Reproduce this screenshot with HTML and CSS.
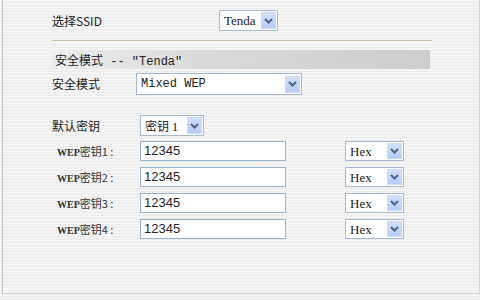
FILE: index.html
```html
<!DOCTYPE html>
<html lang="zh-CN">
<head>
    <meta charset="UTF-8">
    <title>无线安全设置</title>
    <link rel="stylesheet" href="styles.css">
</head>
<body>
    <div class="panel">
        <div class="row ssid-row">
            <span class="label ssid-label">选择SSID</span>
            <div class="combo combo-ssid">
                <span class="value serif">Tenda</span>
                <span class="arrow"><svg width="9" height="6" viewBox="0 0 9 6"><path d="M1 1 L4.5 4.5 L8 1" fill="none" stroke="#4d6185" stroke-width="2"/></svg></span>
            </div>
        </div>
        <div class="divider"></div>
        <div class="section-bar">安全模式<span class="mono"> -- "Tenda"</span></div>
        <div class="row mode-row">
            <span class="label mode-label">安全模式</span>
            <div class="combo combo-mode">
                <span class="value mono">Mixed WEP</span>
                <span class="arrow"><svg width="9" height="6" viewBox="0 0 9 6"><path d="M1 1 L4.5 4.5 L8 1" fill="none" stroke="#4d6185" stroke-width="2"/></svg></span>
            </div>
        </div>
        <div class="row key-row">
            <span class="label key-label">默认密钥</span>
            <div class="combo combo-key">
                <span class="value">密钥 <span class="serif">1</span></span>
                <span class="arrow"><svg width="9" height="6" viewBox="0 0 9 6"><path d="M1 1 L4.5 4.5 L8 1" fill="none" stroke="#4d6185" stroke-width="2"/></svg></span>
            </div>
        </div>
        <div class="wep-list">
            <div class="row wep-row">
                <span class="wep-label"><span class="serif-b">WEP</span>密钥1 :</span>
                <div class="text-box">12345</div>
                <div class="combo combo-hex">
                    <span class="value serif">Hex</span>
                    <span class="arrow"><svg width="9" height="6" viewBox="0 0 9 6"><path d="M1 1 L4.5 4.5 L8 1" fill="none" stroke="#4d6185" stroke-width="2"/></svg></span>
                </div>
            </div>
            <div class="row wep-row">
                <span class="wep-label"><span class="serif-b">WEP</span>密钥2 :</span>
                <div class="text-box">12345</div>
                <div class="combo combo-hex">
                    <span class="value serif">Hex</span>
                    <span class="arrow"><svg width="9" height="6" viewBox="0 0 9 6"><path d="M1 1 L4.5 4.5 L8 1" fill="none" stroke="#4d6185" stroke-width="2"/></svg></span>
                </div>
            </div>
            <div class="row wep-row">
                <span class="wep-label"><span class="serif-b">WEP</span>密钥3 :</span>
                <div class="text-box">12345</div>
                <div class="combo combo-hex">
                    <span class="value serif">Hex</span>
                    <span class="arrow"><svg width="9" height="6" viewBox="0 0 9 6"><path d="M1 1 L4.5 4.5 L8 1" fill="none" stroke="#4d6185" stroke-width="2"/></svg></span>
                </div>
            </div>
            <div class="row wep-row">
                <span class="wep-label"><span class="serif-b">WEP</span>密钥4 :</span>
                <div class="text-box">12345</div>
                <div class="combo combo-hex">
                    <span class="value serif">Hex</span>
                    <span class="arrow"><svg width="9" height="6" viewBox="0 0 9 6"><path d="M1 1 L4.5 4.5 L8 1" fill="none" stroke="#4d6185" stroke-width="2"/></svg></span>
                </div>
            </div>
        </div>
    </div>
</body>
</html>
```

FILE: styles.css
```css
body {
    margin: 0;
    background: repeating-linear-gradient(#f4f4f4 0 2px, #ebebeb 2px 3px);
    font-family: "Noto Sans CJK SC", sans-serif;
    font-size: 12px;
    color: #222;
}
.panel {
    margin-left: 2px;
    width: 478px;
    height: 294px;
    box-sizing: border-box;
    border-left: 1px solid #c4c4c4;
    border-right: 1px solid #d4d4d4;
    border-bottom: 1px solid #cfcfcf;
    padding-left: 49px;
    padding-top: 10px;
}
.row {
    display: flex;
    align-items: center;
}
.label {
    line-height: 14px;
}
.ssid-label {
    width: 167px;
}
.mode-label {
    width: 84px;
}
.key-label {
    width: 88px;
}
.serif {
    font-family: "Liberation Serif", serif;
    font-size: 13px;
}
.serif-b {
    font-family: "Liberation Serif", serif;
    font-weight: bold;
    font-size: 10px;
}
.mono {
    font-family: "Liberation Mono", monospace;
    font-size: 12px;
}
.combo {
    display: flex;
    align-items: center;
    justify-content: space-between;
    height: 21px;
    box-sizing: border-box;
    border: 1px solid #a5b9d2;
    background: #fff;
    padding: 1px 1px 1px 4px;
}
.combo .value {
    line-height: 17px;
    white-space: nowrap;
}
.arrow {
    display: flex;
    align-items: center;
    justify-content: center;
    width: 15px;
    height: 17px;
    box-sizing: border-box;
    border: 1px solid #cbdafc;
    background: linear-gradient(#d3e0fd, #b7cbf8);
}
.combo-ssid {
    width: 59px;
}
.divider {
    margin-top: 9px;
    width: 380px;
    border-top: 1px solid #c9bea3;
    border-bottom: 1px solid #f8f8f8;
}
.section-bar {
    margin-top: 8px;
    width: 378px;
    height: 19px;
    line-height: 19px;
    padding-left: 3px;
    box-sizing: border-box;
    background: linear-gradient(to right, #ededed, #d9d9d9 40%, #cdcdcd);
}
.mode-row {
    margin-top: 4px;
}
.combo-mode {
    width: 166px;
    height: 22px;
}
.key-row {
    margin-top: 20px;
}
.combo-key {
    width: 64px;
}
.wep-list {
    margin-top: 5px;
    display: flex;
    flex-direction: column;
    gap: 6px;
}
.wep-row {
    height: 20px;
}
.wep-label {
    width: 88px;
    flex-shrink: 0;
    padding-left: 5px;
    box-sizing: border-box;
    font-size: 11px;
    color: #333;
    white-space: nowrap;
}
.text-box {
    width: 146px;
    height: 20px;
    box-sizing: border-box;
    border: 1px solid #98b2c9;
    background: #fff;
    padding-left: 3px;
    font-family: "Liberation Sans", sans-serif;
    font-size: 13px;
    line-height: 18px;
}
.combo-hex {
    margin-left: 59px;
    width: 59px;
    height: 20px;
}
.combo-hex .arrow {
    height: 16px;
}
```
